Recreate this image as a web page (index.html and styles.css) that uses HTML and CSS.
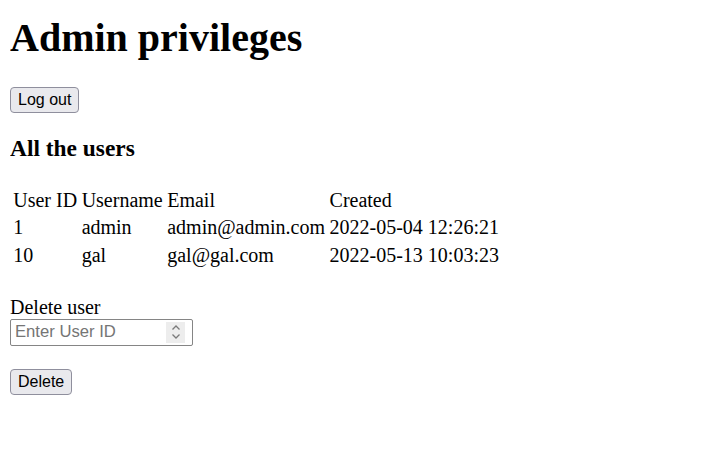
FILE: index.html
```html
<!DOCTYPE html>
<html>
<head>
<meta charset="utf-8">
<link rel="stylesheet" href="styles.css">
</head>
<body>
<h1 class="title">Admin privileges</h1>
<form class="logout-form">
<button type="button" class="btn">Log out</button>
</form>
<h3 class="subtitle">All the users</h3>
<table class="users">
<tr><td>User ID</td><td>Username</td><td>Email</td><td>Created</td></tr>
<tr><td>1</td><td>admin</td><td>admin@admin.com</td><td>2022-05-04 12:26:21</td></tr>
<tr><td>10</td><td>gal</td><td>gal@gal.com</td><td>2022-05-13 10:03:23</td></tr>
</table>
<form class="delete-form">
<label class="label" for="uid">Delete user</label><br>
<span class="num-wrap"><input id="uid" class="num" type="number" placeholder="Enter User ID"><span class="spin"><svg width="10" height="16" viewBox="0 0 10 16"><path d="M1.5 5.5 L5 2 L8.5 5.5 M1.5 10.5 L5 14 L8.5 10.5" fill="none" stroke="#7a7a7a" stroke-width="1.3"/></svg></span></span><br><br>
<button type="button" class="btn">Delete</button>
</form>
</body>
</html>
```

FILE: styles.css
```css
body {
  margin: 0 10px 10px;
  font-family: "Liberation Serif", "Times New Roman", serif;
  font-size: 20px;
  color: #000;
  background: #fff;
}
.title {
  font-size: 40px;
  margin: 14px 0 26px;
}
.btn {
  font-family: "Liberation Sans", Arial, sans-serif;
  font-size: 16px;
  padding: 3px 7px;
  border: 1px solid #8f8f9d;
  border-radius: 4px;
  background: #e9e9ed;
  color: #000;
}
.subtitle {
  font-size: 23.4px;
  margin: 22px 0 23.4px;
}
.users {
  border-spacing: 2.5px;
  margin-bottom: 26px;
}
.users td {
  padding: 1.25px;
}
.num-wrap {
  position: relative;
  display: inline-block;
}
.num {
  font-family: "Liberation Sans", Arial, sans-serif;
  font-size: 16.67px;
  width: 183px;
  height: 27px;
  box-sizing: border-box;
  padding: 2px 4px;
  border: 1px solid #858585;
  border-radius: 2px;
  -moz-appearance: textfield;
  display: block;
}
.num::-webkit-inner-spin-button,
.num::-webkit-outer-spin-button {
  -webkit-appearance: none;
  margin: 0;
}
.num::placeholder {
  color: #757575;
}
.spin {
  position: absolute;
  right: 8px;
  top: 3px;
  width: 19px;
  height: 21px;
  background: #ededed;
  display: flex;
  align-items: center;
  justify-content: center;
}
```
